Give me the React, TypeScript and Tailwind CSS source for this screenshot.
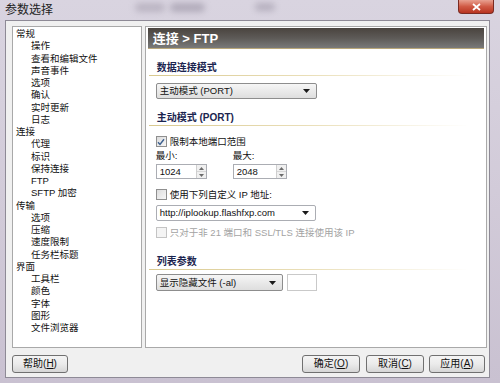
import React from 'react';

const FONT = { fontFamily: '"Liberation Sans", "Noto Sans CJK SC", sans-serif' };

type Node = { label: string; children?: string[] };

const TREE: Node[] = [
  { label: '常规', children: ['操作', '查看和编辑文件', '声音事件', '选项', '确认', '实时更新', '日志'] },
  { label: '连接', children: ['代理', '标识', '保持连接', 'FTP', 'SFTP 加密'] },
  { label: '传输', children: ['选项', '压缩', '速度限制', '任务栏标题'] },
  { label: '界面', children: ['工具栏', '颜色', '字体', '图形', '文件浏览器'] },
];

function Arrow() {
  return (
    <svg width="7" height="4" viewBox="0 0 7 4" className="shrink-0">
      <path d="M0 0h7L3.5 4z" fill="#1a1a1a" />
    </svg>
  );
}

function Combo({ text, className }: { text: string; className: string }) {
  return (
    <div className={`flex items-center justify-between rounded-[2px] border border-[#8d8d8d] bg-gradient-to-b from-[#f6f6f6] to-[#dedede] pl-[3px] pr-[6px] text-[9.5px] leading-none text-[#111] ${className}`}>
      <span>{text}</span>
      <Arrow />
    </div>
  );
}

function Section({ title, className }: { title: string; className: string }) {
  return (
    <div className={`relative h-[15px] ${className}`}>
      <div className="pl-[1px] text-[10px] font-bold leading-[13px] text-[#1b2550]">{title}</div>
      <div className="absolute bottom-[0px] left-[-7px] h-[1px] w-[320px] bg-gradient-to-r from-[#d9c98f] via-[#eadfb8] to-transparent" />
    </div>
  );
}

function Check({ checked, disabled, label, className }: { checked?: boolean; disabled?: boolean; label: string; className: string }) {
  return (
    <div className={`flex h-[13px] items-center gap-[3px] text-[9.5px] leading-none ${disabled ? 'text-[#a3a3a3]' : 'text-[#111]'} ${className}`}>
      <div className={`flex h-[11px] w-[11px] items-center justify-center border ${disabled ? 'border-[#c4c4c4] bg-[#f4f4f4]' : 'border-[#8f8f8f] bg-gradient-to-br from-[#dcdcdc] to-[#f7f7f7]'}`}>
        {checked && (
          <svg width="8" height="8" viewBox="0 0 8 8">
            <path d="M1 4.2l2 2.2L7 1.2" stroke="#3b5f8f" strokeWidth="1.4" fill="none" />
          </svg>
        )}
      </div>
      <span>{label}</span>
    </div>
  );
}

function Spin({ value, className }: { value: string; className: string }) {
  return (
    <div className={`flex h-[15px] items-stretch border border-[#abadb3] bg-white ${className}`}>
      <div className="flex flex-1 items-center pl-[3px] text-[9.5px] leading-none text-[#111]">{value}</div>
      <div className="flex w-[10px] flex-col border-l border-[#cfcfcf] bg-[#f0f0f0]">
        <div className="flex flex-1 items-center justify-center border-b border-[#d6d6d6]">
          <svg width="5" height="3" viewBox="0 0 5 3"><path d="M0 3h5L2.5 0z" fill="#6b6b6b" /></svg>
        </div>
        <div className="flex flex-1 items-center justify-center">
          <svg width="5" height="3" viewBox="0 0 5 3"><path d="M0 0h5L2.5 3z" fill="#6b6b6b" /></svg>
        </div>
      </div>
    </div>
  );
}

function Btn({ label, k, className }: { label: string; k: string; className: string }) {
  return (
    <div className={`flex h-[18px] items-center justify-center rounded-[3px] border border-[#707070] bg-gradient-to-b from-[#f4f4f4] via-[#ebebeb] to-[#d6d6d6] text-[10px] leading-none text-[#111] ${className}`}>
      {label}(<span className="underline">{k}</span>)
    </div>
  );
}

export default function App() {
  return (
    <div style={FONT} className="relative flex h-[383px] w-[500px] flex-col overflow-hidden bg-gradient-to-b from-[#d9d4e0] via-[#d2cbd9] to-[#c9c1d1]">
      {/* title bar */}
      <div className="relative flex h-[20px] items-center pl-[5px]">
        <span className="text-[12px] leading-none text-[#222]">参数选择</span>
        <div className="absolute left-[135px] top-[3px] h-[9px] w-[30px] rounded-full bg-[#9d96a6] opacity-50 blur-[3px]" />
        <div className="absolute left-[170px] top-[3px] h-[9px] w-[35px] rounded-full bg-[#8b8496] opacity-50 blur-[3px]" />
        <div className="absolute left-[255px] top-[3px] h-[8px] w-[20px] rounded-full bg-[#8b8496] opacity-45 blur-[3px]" />
        <div className="absolute right-[6px] top-0 flex h-[14px] w-[36px] items-center justify-center rounded-b-[4px] border border-t-0 border-[#7a2a22] bg-gradient-to-b from-[#e8a090] via-[#d05a45] to-[#b8321f]">
          <svg width="9" height="8" viewBox="0 0 9 8">
            <path d="M1 1l7 6M8 1L1 7" stroke="#fff" strokeWidth="1.8" />
          </svg>
        </div>
      </div>

      {/* dialog body */}
      <div className="ml-[5px] flex h-[358px] w-[485px] flex-col border border-[#8e8a96] bg-[#f0f0f0] pl-[6px] pr-[2px] pt-[5px]">
        <div className="flex h-[322px] gap-[3px]">
          {/* tree */}
          <div className="h-[322px] w-[130px] border border-[#a9a9a9] bg-white pl-[3px] pt-[1px]">
            {TREE.map(n => (
              <div key={n.label}>
                <div className="text-[9.5px] leading-[12.25px] text-[#111]">{n.label}</div>
                {n.children?.map(c => (
                  <div key={c} className="pl-[15px] text-[9.5px] leading-[12.25px] text-[#111]">{c}</div>
                ))}
              </div>
            ))}
          </div>

          {/* right panel */}
          <div className="flex h-[322px] w-[343px] flex-col border border-[#a9a9a9] bg-white px-[2px] pt-[1px]">
            <div className="flex h-[21px] items-center border-b border-[#b9a77a] bg-gradient-to-b from-[#4a443f] via-[#5d5a57] to-[#7a7a7a] pl-[5px] text-[13px] font-bold leading-none text-white">
              连接 &gt; FTP
            </div>
            <div className="flex flex-col pl-[8px]">
              <Section title="数据连接模式" className="mt-[12px]" />
              <Combo text="主动模式 (PORT)" className="mt-[7px] h-[16px] w-[161px]" />
              <Section title="主动模式 (PORT)" className="mt-[12px]" />
              <Check checked label="限制本地端口范围" className="mt-[9px]" />
              <div className="mt-[2px] flex h-[12px] items-center text-[9.5px] leading-none text-[#111]">
                <span className="w-[77px]">最小:</span>
                <span>最大:</span>
              </div>
              <div className="mt-[2px] flex gap-[26px]">
                <Spin value="1024" className="w-[51px]" />
                <Spin value="2048" className="w-[54px]" />
              </div>
              <Check label="使用下列自定义 IP 地址:" className="mt-[9px]" />
              <Combo text="http://iplookup.flashfxp.com" className="mt-[4px] h-[16px] w-[160px] !bg-none !bg-white !border-[#abadb3]" />
              <Check disabled label="只对于非 21 端口和 SSL/TLS 连接使用该 IP" className="mt-[5px]" />
              <Section title="列表参数" className="mt-[16px]" />
              <div className="mt-[4px] flex gap-[4px]">
                <Combo text="显示隐藏文件 (-al)" className="h-[17px] w-[127px]" />
                <div className="h-[17px] w-[30px] border border-[#c9c9c9] bg-white" />
              </div>
            </div>
          </div>
        </div>

        {/* buttons */}
        <div className="mt-[7px] flex items-center">
          <Btn label="帮助" k="H" className="w-[56px]" />
          <div className="flex-1" />
          <Btn label="确定" k="O" className="w-[58px]" />
          <Btn label="取消" k="C" className="ml-[6px] w-[58px]" />
          <Btn label="应用" k="A" className="ml-[5px] mr-[2px] w-[56px]" />
        </div>
      </div>
    </div>
  );
}
